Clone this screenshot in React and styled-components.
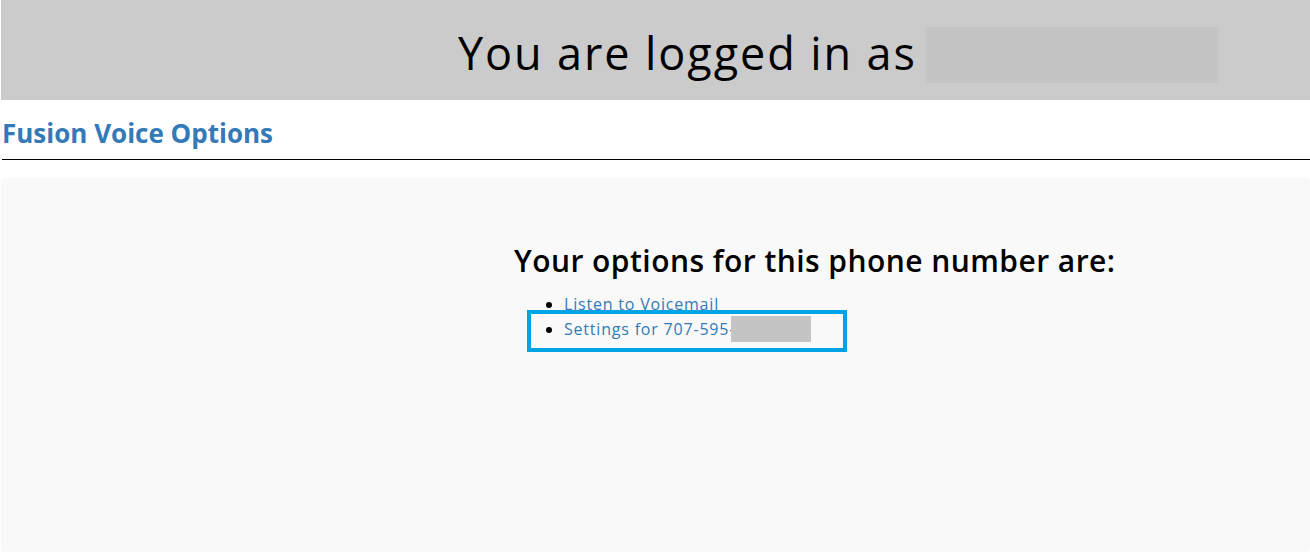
import React from 'react'
import styled, { createGlobalStyle } from 'styled-components'

const GlobalStyle = createGlobalStyle`
    html, body {
        margin: 0;
        padding: 0;
        background: #fff;
    }
    body {
        font-family: "Open Sans", Lato, sans-serif;
        color: #000;
    }
`

function App() {
    return (
        <Page>
            <GlobalStyle />
            <Banner>
                <span>You are logged in as</span>
                <Redacted $w={294} $h={56} />
            </Banner>
            <Title>Fusion Voice Options</Title>
            <Rule />
            <Panel>
                <Options>
                    <h2>Your options for this phone number are:</h2>
                    <ul>
                        <li><a href="#voicemail">Listen to Voicemail</a></li>
                        <Highlight>
                            <a href="#settings">Settings for 707-595-</a>
                            <Redacted $w={80} $h={26} />
                        </Highlight>
                    </ul>
                </Options>
            </Panel>
        </Page>
    )
}

export default App

const Page = styled.div`
    padding: 0 0 1px 1px;
`

const Redacted = styled.div`
    width: ${p => p.$w}px;
    height: ${p => p.$h}px;
    background: #c4c4c4;
    display: inline-block;
    vertical-align: middle;
`

const Banner = styled.div`
    height: 100px;
    background: #cbcbcb;
    display: flex;
    align-items: center;
    padding-left: 457px;
    gap: 8px;
    font-size: 45px;
    letter-spacing: 1.9px;
    color: #000;

    span {
        position: relative;
        top: 2px;
    }

    ${Redacted} {
        margin-top: 10px;
    }
`

const Title = styled.h1`
    margin: 0;
    padding: 17px 0 0 1px;
    font-size: 26px;
    font-weight: 700;
    color: #337ab7;
    line-height: 32px;
`

const Rule = styled.hr`
    margin: 10px 0 0 1px;
    border: none;
    border-top: 1px solid #000;
    height: 0;
`

const Panel = styled.div`
    margin-top: 18px;
    height: 374px;
    background: #f9f9f9;
    border-radius: 4px;
`

const Options = styled.div`
    padding: 64px 0 0 513px;

    h2 {
        margin: 0 0 13px;
        font-size: 30px;
        font-weight: 600;
        line-height: 38px;
        letter-spacing: 0.45px;
    }

    ul {
        margin: 0;
        padding-left: 50px;
        font-size: 16px;
        line-height: 23px;
    }

    a {
        color: #337ab7;
        text-decoration: none;
        letter-spacing: 0.8px;
    }
`

const Highlight = styled.li`
    position: relative;

    &::after {
        content: '';
        position: absolute;
        left: -37px;
        top: -6px;
        width: 312px;
        height: 34px;
        border: 4px solid #00a3e4;
    }

    ${Redacted} {
        height: 26px;
        margin-left: -4px;
        vertical-align: -7px;
    }
`
